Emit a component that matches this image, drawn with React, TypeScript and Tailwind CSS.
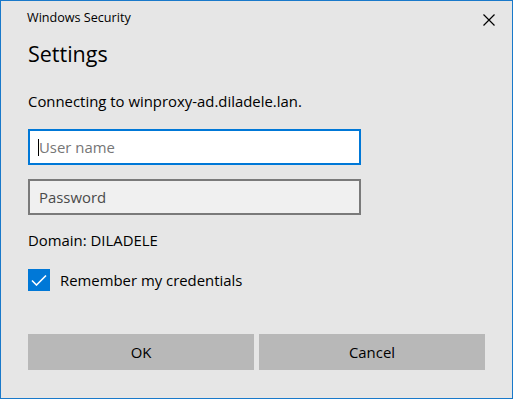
import React, { useState } from "react";

const font = { fontFamily: '"Segoe UI", "Open Sans", "Noto Sans", sans-serif' };

const App: React.FC = () => {
  const [remember, setRemember] = useState(true);

  return (
    <div
      className="w-[513px] h-[399px] bg-[#e6e6e6] border border-[#1979ca] flex flex-col text-black"
      style={font}
    >
      {/* title bar */}
      <div className="flex items-start justify-between h-[32px] pl-[26px] pr-[17px] pt-[9px]">
        <span className="text-[12.6px] leading-[16px]">Windows Security</span>
        <svg width="12" height="12" viewBox="0 0 12 12" className="mt-[4px]">
          <path d="M0.5 0.5 L11.5 11.5 M11.5 0.5 L0.5 11.5" stroke="#000" strokeWidth="1.2" />
        </svg>
      </div>

      <div className="flex flex-col px-[27px]">
        <h1 className="text-[21.5px] leading-[30px] mt-[6px]">Settings</h1>

        <p className="text-[14.9px] leading-[20px] mt-[22px]">Connecting to winproxy-ad.diladele.lan.</p>

        <div className="mt-[18px] w-[333px] h-[36px] bg-white border-2 border-[#0078d7] flex items-center pl-[8px]">
          <span className="w-px h-[17px] bg-black" />
          <input
            className="flex-1 bg-transparent outline-none text-[14.9px] text-[#6d6d6d] placeholder-[#767676]"
            placeholder="User name"
          />
        </div>

        <div className="mt-[14px] w-[333px] h-[36px] bg-[#f0f0f0] border-2 border-[#7a7a7a] flex items-center pl-[9px]">
          <input
            type="password"
            className="flex-1 bg-transparent outline-none text-[14.9px] placeholder-[#4a4a4a]"
            placeholder="Password"
          />
        </div>

        <p className="text-[14.9px] leading-[20px] mt-[15px]">Domain: DILADELE</p>

        <label className="flex items-center gap-[10px] mt-[19px] cursor-pointer">
          <span
            className="w-[22px] h-[22px] bg-[#0078d7] flex items-center justify-center"
            onClick={() => setRemember(!remember)}
          >
            {remember && (
              <svg width="16" height="12" viewBox="0 0 16 12">
                <path d="M1 6.5 L5.5 11 L15 1.5" fill="none" stroke="#fff" strokeWidth="1.6" />
              </svg>
            )}
          </span>
          <span className="text-[14.9px] leading-[20px]">Remember my credentials</span>
        </label>

        <div className="flex gap-[5px] mt-[43px]">
          <button className="w-[226px] h-[36px] bg-[#b8b8b8] text-[14.9px]">OK</button>
          <button className="w-[226px] h-[36px] bg-[#b8b8b8] text-[14.9px]">Cancel</button>
        </div>
      </div>
    </div>
  );
};

export default App;
